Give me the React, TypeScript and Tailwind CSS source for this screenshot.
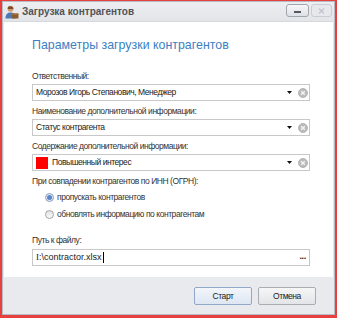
import React from "react";

function TitleIcon() {
  return (
    <svg width="14" height="14" viewBox="0 0 14 14">
      <circle cx="5.5" cy="3.8" r="3" fill="#d29a6c" />
      <path d="M5 1.2 C3 1.2 2.6 3 2.8 4 L8.3 4 C8.4 2.6 7.4 1.2 5 1.2 Z" fill="#7a4b2a" />
      <path d="M0.5 13.5 C0.5 9.5 2.5 7.6 5.5 7.6 C8.5 7.6 10.5 9.5 10.5 13.5 Z" fill="#4f79b4" />
      <rect x="7" y="8.5" width="6.5" height="5" rx="0.6" fill="#8a5a32" />
      <rect x="7" y="8.5" width="6.5" height="1.3" fill="#a8703f" />
    </svg>
  );
}

function ComboEnd() {
  return (
    <div className="flex items-center gap-[6px] ml-auto mr-[1px]">
      <svg width="5" height="3" viewBox="0 0 5 3">
        <path d="M0 0 L5 0 L2.5 3 Z" fill="#111" />
      </svg>
      <svg width="10" height="10" viewBox="0 0 10 10">
        <circle cx="5" cy="5" r="4.5" fill="#bcbcbc" stroke="#a9a9a9" strokeWidth="0.8" />
        <path d="M3.2 3.2 L6.8 6.8 M6.8 3.2 L3.2 6.8" stroke="#f4f4f4" strokeWidth="1.3" />
      </svg>
    </div>
  );
}

function Field({ label, children }: { label: string; children: React.ReactNode }) {
  return (
    <div className="mb-[3px]">
      <div className="leading-[14px] text-[#333]">{label}</div>
      <div className="mt-[1px] h-[17px] flex items-center border border-[#c8c8c8] bg-white pl-[3px] text-[#222]">
        {children}
        <ComboEnd />
      </div>
    </div>
  );
}

function Radio({ checked, label }: { checked: boolean; label: string }) {
  return (
    <div className="h-[17px] flex items-center pl-[13px] text-[#333]">
      {checked ? (
        <span className="w-[9px] h-[9px] rounded-full border border-[#8aa0bf] bg-[#e4ebf5] flex items-center justify-center">
          <span className="w-[5px] h-[5px] rounded-full bg-[#5a86c8]" />
        </span>
      ) : (
        <span className="w-[9px] h-[9px] rounded-full border border-[#a3a3a3] bg-gradient-to-b from-[#e2e2e2] to-[#fafafa]" />
      )}
      <span className="ml-[3px]">{label}</span>
    </div>
  );
}

export default function App() {
  return (
    <div className="w-[337px] h-[318px] bg-[#e8403f] pt-px px-[2px] pb-[3px] font-['Liberation_Sans',Arial,sans-serif] text-[8.5px] tracking-[-0.45px]">
      <div className="h-full flex flex-col bg-[#e4e6ea] border border-[#b7bbc3]">
        {/* title bar */}
        <div className="h-[19px] flex items-start pt-[2px] pl-[2px] pr-[2px] bg-gradient-to-b from-[#eceef1] to-[#e2e4e8]">
          <div className="mt-px">
            <TitleIcon />
          </div>
          <span className="ml-[3px] mt-[2px] font-bold text-[10px] tracking-normal text-[#515356] leading-[12px]">
            Загрузка контрагентов
          </span>
          <div className="ml-auto flex gap-[2px]">
            <div className="w-[23px] h-[13px] rounded-[3px] border border-[#a0a5ae] bg-gradient-to-b from-[#f7f8fa] to-[#dde0e5] flex items-end justify-center pb-[3px]">
              <span className="w-[7px] h-[2px] bg-[#55595f]" />
            </div>
            <div className="w-[21px] h-[13px] rounded-[3px] border border-[#c9ccd2] bg-[#e6e8ec] flex items-center justify-center">
              <svg width="7" height="6" viewBox="0 0 7 6">
                <path d="M1 0.5 L6 5.5 M6 0.5 L1 5.5" stroke="#c2c5cb" strokeWidth="1.3" />
              </svg>
            </div>
          </div>
        </div>

        {/* client area */}
        <div className="mx-px h-[256px] bg-white border-t border-[#d5d8dd] pl-[28px] pr-[23px] pt-[14px]">
          <div className="text-[12.4px] tracking-normal leading-[18px] text-[#3b7fc2] mb-[15px]">
            Параметры загрузки контрагентов
          </div>

          <Field label="Ответственный:">
            <span>Морозов Игорь Степанович, Менеджер</span>
          </Field>
          <Field label="Наименование дополнительной информации:">
            <span>Статус контрагента</span>
          </Field>
          <Field label="Содержание дополнительной информации:">
            <span className="w-[12px] h-[12px] bg-[#ff0000] mr-[4px]" />
            <span>Повышенный интерес</span>
          </Field>

          <div className="leading-[14px] text-[#333]">При совпадении контрагентов по ИНН (ОГРН):</div>
          <div className="pt-px">
            <Radio checked label="пропускать контрагентов" />
            <Radio checked={false} label="обновлять информацию по контрагентам" />
          </div>

          <div className="mt-[10px] leading-[14px] text-[#333]">Путь к файлу:</div>
          <div className="mt-[2px] h-[17px] flex items-center border border-[#c8c8c8] pl-[3px] pr-[3px] text-[#222] tracking-normal text-[9px]">
            <span className="font-['Liberation_Serif',serif]">I</span>
            <span>:\contractor.xlsx</span>
            <span className="w-px h-[11px] bg-black ml-px" />
            <span className="ml-auto font-bold tracking-[-0.3px] leading-none pb-[3px]">...</span>
          </div>
        </div>

        {/* footer */}
        <div className="flex-1 bg-[#e9eaee] flex justify-end items-start pt-[10px] pr-[18px] gap-[6px] text-[#222]">
          <button className="w-[58px] h-[18px] rounded-[2px] border border-[#8fa8c8] bg-gradient-to-b from-[#f3f6fb] to-[#dde6f2] leading-none">
            Старт
          </button>
          <button className="w-[58px] h-[18px] rounded-[2px] border border-[#a9adb3] bg-gradient-to-b from-[#f6f6f7] to-[#e3e4e7] leading-none">
            Отмена
          </button>
        </div>
      </div>
    </div>
  );
}
